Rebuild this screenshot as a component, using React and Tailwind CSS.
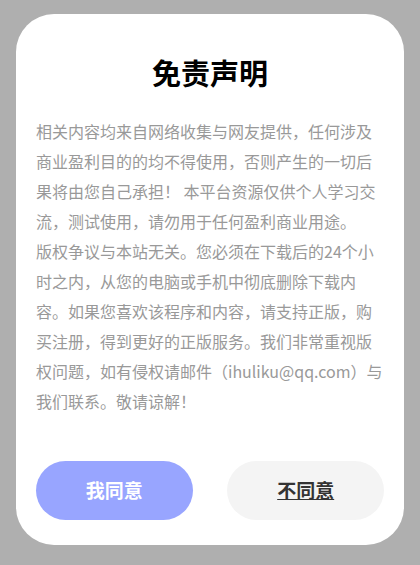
import React from "react";

// Disclaimer dialog: title, long notice text and two choice buttons
export default function App() {
  const font = { fontFamily: '"Noto Sans CJK SC", "Noto Sans", sans-serif' };

  return (
    <div
      className="min-h-screen bg-[#afafaf] px-4 pt-[14px] pb-5"
      style={font}
    >
      <div className="bg-white rounded-[38px] px-5 pt-[38px] pb-[25px]">
        <h1 className="text-center text-[29px] leading-[40px] font-bold text-black">
          免责声明
        </h1>

        <p className="mt-[24px] text-[16px] leading-[30px] text-[#999999]">
          相关内容均来自网络收集与网友提供，任何涉及商业盈利目的的均不得使用，否则产生的一切后果将由您自己承担！
          本平台资源仅供个人学习交流，测试使用，请勿用于任何盈利商业用途。
          <br />
          版权争议与本站无关。您必须在下载后的24个小时之内，从您的电脑或手机中彻底删除下载内容。如果您喜欢该程序和内容，请支持正版，购买注册，得到更好的正版服务。我们非常重视版权问题，如有侵权请邮件（ihuliku@qq.com）与我们联系。敬请谅解！
        </p>

        <div className="mt-[45px] flex justify-between">
          <button className="w-[45%] h-[59px] rounded-full bg-[#98a5ff] text-white text-[19px] font-bold">
            我同意
          </button>
          <button className="w-[45%] h-[59px] rounded-full bg-[#f4f4f4] text-[#333333] text-[19px] font-bold underline">
            不同意
          </button>
        </div>
      </div>
    </div>
  );
}
